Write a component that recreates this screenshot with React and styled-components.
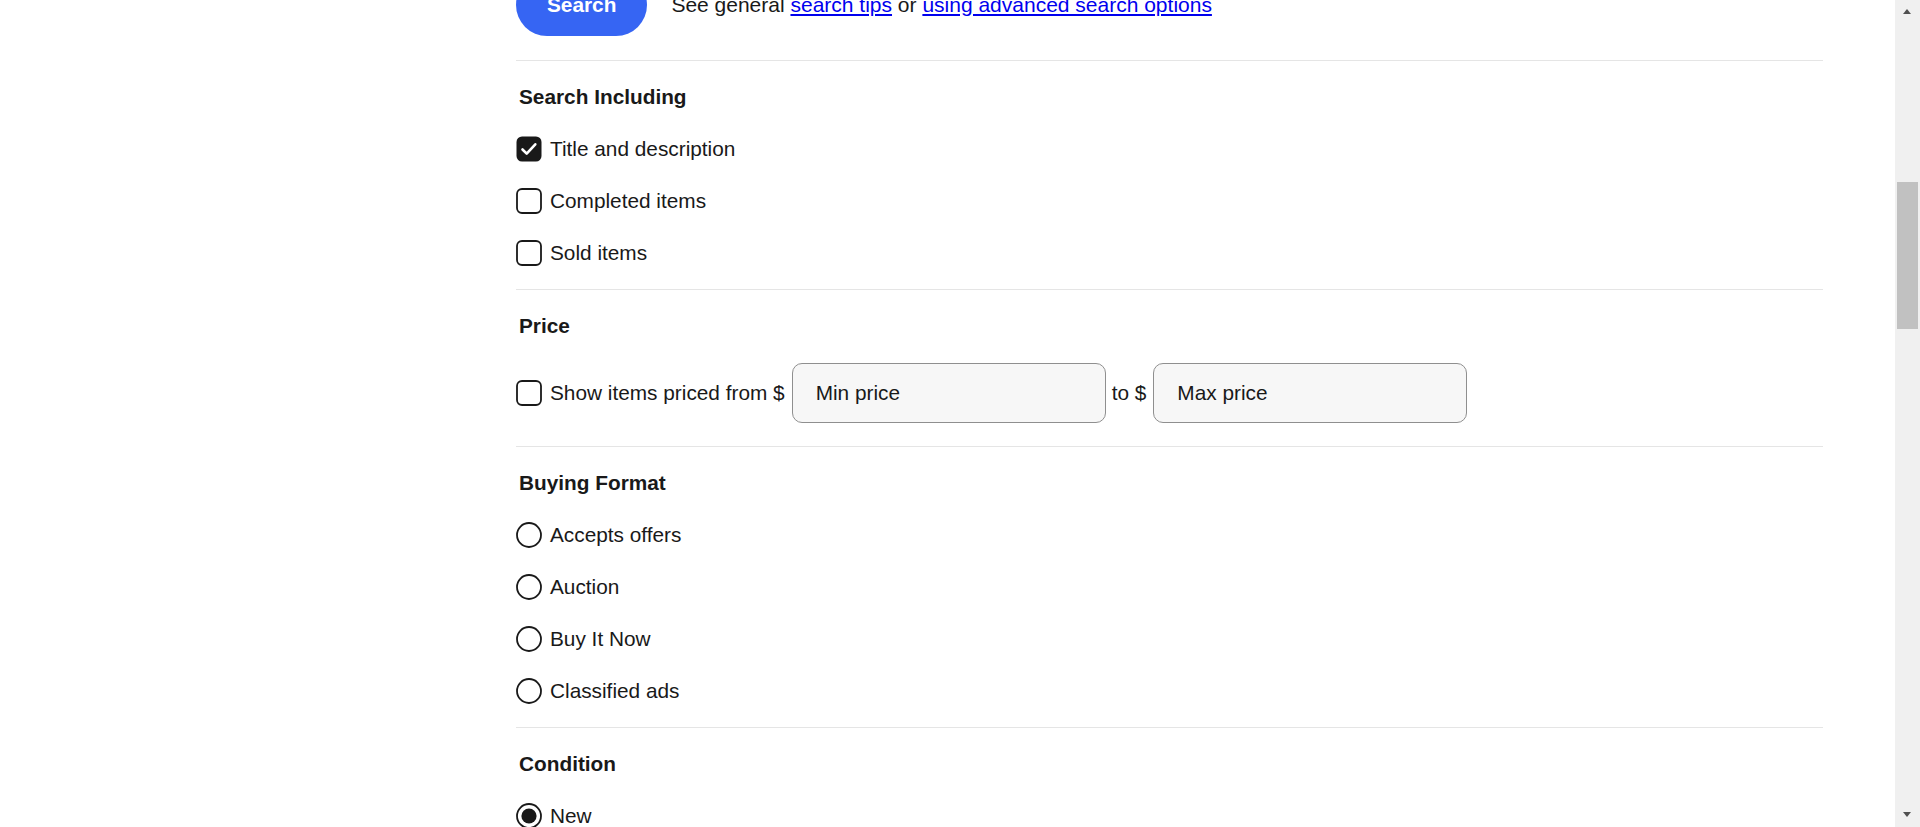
import React from "react";
import styled, { createGlobalStyle } from "styled-components";

const GlobalStyle = createGlobalStyle`
  html, body {
    margin: 0;
    padding: 0;
    background: #fff;
    overflow: hidden;
  }
  body {
    font-family: "Liberation Sans", Arial, sans-serif;
    color: #191919;
  }
`;

const Page = styled.div`
  display: flex;
  height: 827px;
  overflow: hidden;
`;

const Sidebar = styled.aside`
  width: 516px;
  flex: none;
`;

const Main = styled.main`
  width: 1307px;
  flex: none;
  /* page is scrolled: the top of the search row is cut off */
  margin-top: -26px;
`;

const SearchBar = styled.div`
  display: flex;
  align-items: center;
  gap: 24px;
  padding-bottom: 24px;
`;

const SearchButton = styled.button`
  height: 62px;
  padding: 0 31px;
  border: none;
  border-radius: 31px;
  background: #3665f3;
  color: #fff;
  font-family: "Liberation Sans", Arial, sans-serif;
  font-size: 20.8px;
  font-weight: 700;
  cursor: pointer;
`;

const Hint = styled.span`
  font-size: 21px;
  color: #191919;
`;

const Link = styled.a`
  color: #0000ee;
  text-decoration: underline;
`;

const Section = styled.fieldset`
  margin: 0;
  border: none;
  border-top: 1px solid #e5e5e5;
  padding: 22px 0 10px;
`;

const Heading = styled.div`
  font-size: 20.8px;
  font-weight: 700;
  line-height: 28px;
  padding-left: 3px;
  margin-bottom: 12px;
`;

const OptionRow = styled.label`
  display: flex;
  align-items: center;
  gap: 8px;
  height: 52px;
  font-size: 20.8px;
  cursor: pointer;
`;

const PriceRow = styled.div`
  display: flex;
  align-items: center;
  height: 81px;
  margin-bottom: 3px;
  font-size: 20.8px;
`;

const PriceLabel = styled.label`
  display: flex;
  align-items: center;
  gap: 8px;
  margin-right: 7px;
`;

const Between = styled.span`
  margin: 0 7px 0 6px;
`;

const PriceInput = styled.input`
  box-sizing: border-box;
  width: 314px;
  height: 60px;
  padding: 0 23px;
  border: 1px solid #8f8f8f;
  border-radius: 10px;
  background: #f7f7f7;
  font-family: "Liberation Sans", Arial, sans-serif;
  font-size: 20.8px;
  color: #191919;
  outline: none;
  &::placeholder {
    color: #191919;
    opacity: 1;
  }
`;

const IconBox = styled.span`
  display: inline-flex;
  width: 26px;
  height: 26px;
  flex: none;
`;

const Scrollbar = styled.div`
  position: fixed;
  top: 0;
  right: 0;
  width: 25px;
  height: 100vh;
  background: #f0f0f0;
`;

const Thumb = styled.div`
  position: absolute;
  top: 182px;
  left: 2px;
  right: 2px;
  height: 147px;
  background: #c1c1c1;
`;

const Arrow = styled.div`
  position: absolute;
  left: 8px;
  width: 0;
  height: 0;
  border-left: 4.5px solid transparent;
  border-right: 4.5px solid transparent;
  ${(p) =>
    p.$down
      ? "bottom: 10px; border-top: 5px solid #505050;"
      : "top: 9px; border-bottom: 5px solid #505050;"}
`;

function Checkbox({ checked }) {
  return (
    <IconBox>
      <svg width="26" height="26" viewBox="0 0 26 26">
        {checked ? (
          <>
            <rect x="0.5" y="0.5" width="25" height="25" rx="5.5" fill="#191919" />
            <path
              d="M6.5 13.5l4.2 4.2 8.6-9.4"
              fill="none"
              stroke="#fff"
              strokeWidth="2.6"
              strokeLinecap="round"
              strokeLinejoin="round"
            />
          </>
        ) : (
          <rect
            x="1"
            y="1"
            width="24"
            height="24"
            rx="5"
            fill="#fff"
            stroke="#191919"
            strokeWidth="1.8"
          />
        )}
      </svg>
    </IconBox>
  );
}

function Radio({ checked }) {
  return (
    <IconBox>
      <svg width="26" height="26" viewBox="0 0 26 26">
        <circle cx="13" cy="13" r="12" fill="#fff" stroke="#191919" strokeWidth="1.8" />
        {checked && <circle cx="13" cy="13" r="7.6" fill="#191919" />}
      </svg>
    </IconBox>
  );
}

const including = [
  { label: "Title and description", checked: true },
  { label: "Completed items", checked: false },
  { label: "Sold items", checked: false },
];

const formats = ["Accepts offers", "Auction", "Buy It Now", "Classified ads"];

const conditions = [
  { label: "New", checked: true },
  { label: "Used", checked: false },
  { label: "Not specified", checked: false },
];

export default function App() {
  return (
    <>
      <GlobalStyle />
      <Page>
        <Sidebar />
        <Main>
          <SearchBar>
            <SearchButton>Search</SearchButton>
            <Hint>
              See general <Link href="#">search tips</Link> or{" "}
              <Link href="#">using advanced search options</Link>
            </Hint>
          </SearchBar>

          <Section>
            <Heading>Search Including</Heading>
            {including.map((o) => (
              <OptionRow key={o.label}>
                <Checkbox checked={o.checked} />
                {o.label}
              </OptionRow>
            ))}
          </Section>

          <Section>
            <Heading>Price</Heading>
            <PriceRow>
              <PriceLabel>
                <Checkbox />
                Show items priced from $
              </PriceLabel>
              <PriceInput placeholder="Min price" />
              <Between>to $</Between>
              <PriceInput placeholder="Max price" />
            </PriceRow>
          </Section>

          <Section>
            <Heading>Buying Format</Heading>
            {formats.map((f) => (
              <OptionRow key={f}>
                <Radio />
                {f}
              </OptionRow>
            ))}
          </Section>

          <Section>
            <Heading>Condition</Heading>
            {conditions.map((c) => (
              <OptionRow key={c.label}>
                <Radio checked={c.checked} />
                {c.label}
              </OptionRow>
            ))}
          </Section>
        </Main>
      </Page>
      <Scrollbar>
        <Arrow />
        <Thumb />
        <Arrow $down />
      </Scrollbar>
    </>
  );
}
